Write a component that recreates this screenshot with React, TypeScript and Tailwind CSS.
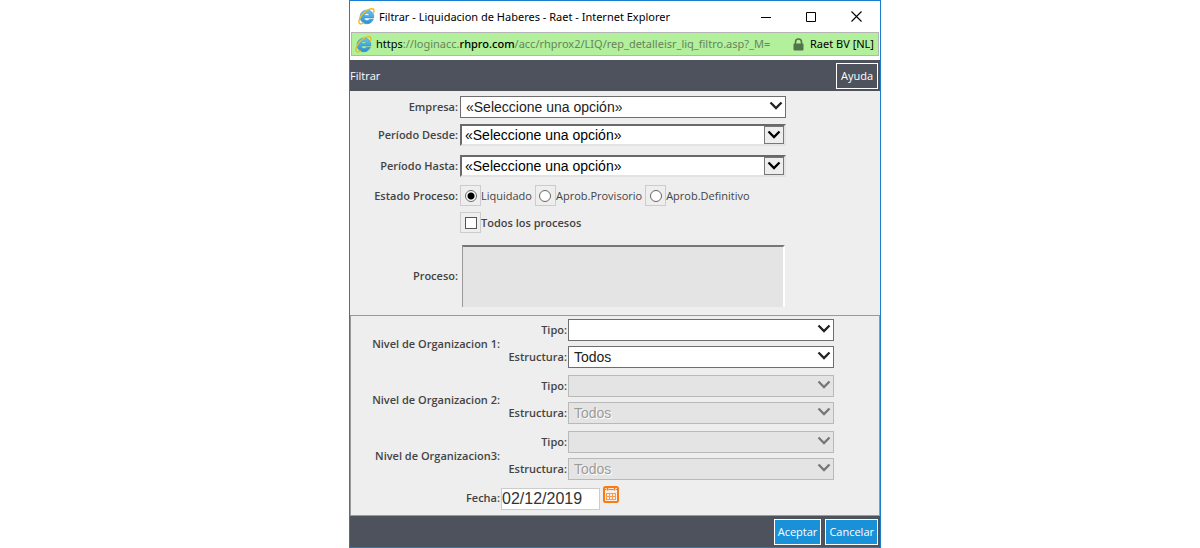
import { useState } from "react";
import type { ReactNode } from "react";

function ExplorerLogo({ id }: { id: string }) {
  return (
    <svg width="17" height="17" viewBox="0 0 17 17" aria-hidden="true" className="shrink-0">
      <defs>
        <linearGradient id={id} x1="0" y1="0" x2="0" y2="1">
          <stop offset="0" stopColor="#62c6f0" />
          <stop offset="1" stopColor="#2b8fd4" />
        </linearGradient>
      </defs>
      <path
        d="M8.800 2a6.900 6.900 0 1 0 6.600 9.200h-4a2.900 2.900 0 0 1-5.300-1.300H15.800A6.900 6.900 0 0 0 8.800 2zM6.200 7.400a2.700 2.700 0 0 1 5.300 0z"
        fill={`url(#${id})`}
        stroke="#2784c6"
        strokeWidth="0.5"
      />
      <path
        d="M15.400 5c.9-2 .9-3.500-.3-4C12.800.2 8.300 2.200 5 5.500C1.700 8.900.2 13.500 1.300 15.200c.7 1.100 2.400.8 4.200-.3"
        fill="none"
        stroke="#efbb22"
        strokeWidth="1.400"
        strokeLinecap="round"
      />
    </svg>
  );
}

function Chevron({ className }: { className: string }) {
  return (
    <svg width="14" height="10" viewBox="0 0 14 10" aria-hidden="true" className={className}>
      <path d="M1.500 1.500L7 7L12.500 1.500" fill="none" stroke="currentColor" strokeWidth="2.300" />
    </svg>
  );
}

type SelectProps = {
  id: string;
  value?: string;
  disabled?: boolean;
  sunken?: boolean;
};

function SelectBox({ id, value = "", disabled = false, sunken = false }: SelectProps) {
  const frame = sunken
    ? "border-2 border-t-[#696969] border-l-[#696969] border-r-[#e3e3e3] border-b-[#e3e3e3] bg-white pl-[3px] text-black"
    : disabled
      ? "border border-[#b9b9b9] bg-[#e4e4e4] pl-[5px] text-[#9b9b9b] [text-shadow:1px_1px_0_#fff]"
      : "border border-[#6e6e6e] bg-white pl-[5px] text-[#222]";
  return (
    <div className="relative">
      <select
        id={id}
        disabled={disabled}
        defaultValue={value}
        className={`block h-[22px] w-full appearance-none rounded-none font-['Liberation_Sans',Arial,sans-serif] text-[14px] leading-[18px] opacity-100 outline-none ${frame}`}
      >
        <option value={value}>{value}</option>
      </select>
      {sunken ? (
        <span className="pointer-events-none absolute top-[2px] right-[2px] flex h-[18px] w-5 items-center justify-center border border-[#777] bg-[#eee] text-black">
          <Chevron className="" />
        </span>
      ) : (
        <Chevron
          className={`pointer-events-none absolute top-[5px] right-[3px] ${disabled ? "text-[#777]" : "text-[#222]"}`}
        />
      )}
    </div>
  );
}

function Label({ htmlFor, children }: { htmlFor: string; children: ReactNode }) {
  return (
    <label htmlFor={htmlFor} className="text-right font-semibold whitespace-nowrap">
      {children}
    </label>
  );
}

function Level({ n, title, disabled, value }: { n: number; title: string; disabled: boolean; value: string }) {
  return (
    <div role="group" aria-labelledby={`nivel${n}`} className="grid grid-cols-[149px_1fr] items-center">
      <span id={`nivel${n}`} className="text-right font-semibold whitespace-nowrap">
        {title}
      </span>
      <div className="grid grid-cols-[67px_minmax(0,266px)] items-center gap-x-px gap-y-[5px] pt-[3px] pb-1">
        <Label htmlFor={`tipo${n}`}>Tipo:</Label>
        <SelectBox id={`tipo${n}`} disabled={disabled} />
        <Label htmlFor={`estructura${n}`}>Estructura:</Label>
        <SelectBox id={`estructura${n}`} value={value} disabled={disabled} />
      </div>
    </div>
  );
}

const STATES = ["Liquidado", "Aprob.Provisorio", "Aprob.Definitivo"];

export default function App() {
  const [state, setState] = useState(STATES[0]);
  const [all, setAll] = useState(false);
  const [date, setDate] = useState("02/12/2019");

  return (
    <main className="min-h-screen bg-white pl-[349px] font-['Open_Sans','Noto_Sans',sans-serif] text-[11px] leading-4 text-[#444]">
      <section className="w-full max-w-[532px] border border-[#1a7fd0] bg-white">
        <header className="flex h-[31px] items-center pr-[18px] pl-2 font-['Noto_Sans',sans-serif] text-black">
          <ExplorerLogo id="logo-title" />
          <h1 className="ml-1 flex-1 whitespace-nowrap">Filtrar - Liquidacion de Haberes - Raet - Internet Explorer</h1>
          <div className="flex gap-[35px]">
            <button type="button" aria-label="Minimizar">
              <svg width="10" height="10" viewBox="0 0 10 10"><path d="M0 5.500H10" stroke="#000" /></svg>
            </button>
            <button type="button" aria-label="Maximizar">
              <svg width="10" height="10" viewBox="0 0 10 10"><path d="M.5.5H9.500V9.500H.5Z" fill="none" stroke="#000" /></svg>
            </button>
            <button type="button" aria-label="Cerrar">
              <svg width="11" height="11" viewBox="0 0 11 11"><path d="M.5.5L10.500 10.500M10.500.5L.5 10.500" stroke="#000" strokeWidth="1.100" /></svg>
            </button>
          </div>
        </header>

        <div className="mx-px mb-1 flex h-6 items-center border border-[#b4b4b4] bg-[#b2f09c] pr-1 pl-[3px] font-['Noto_Sans',sans-serif] whitespace-nowrap text-[#67845d]">
          <ExplorerLogo id="logo-address" />
          <p className="ml-1 flex-1">
            <span className="text-black">https</span>://loginacc.<span className="font-medium text-black">rhpro.com</span>
            /acc/rhprox2/LIQ/rep_detalleisr_liq_filtro.asp?_M=
          </p>
          <svg width="11" height="13" viewBox="0 0 11 13" aria-hidden="true" className="mr-[6px] shrink-0">
            <path d="M2.500 6V4a3 3 0 0 1 6 0V6" fill="none" stroke="#53734a" strokeWidth="1.600" />
            <rect x="0.500" y="5.500" width="10" height="7" rx="1" fill="#53734a" />
          </svg>
          <span className="text-black">Raet BV [NL]</span>
        </div>

        <div className="flex h-[31px] items-center justify-between bg-[#4e525d] pr-0.5 text-white">
          <h2>Filtrar</h2>
          <button type="button" className="h-[26px] border border-white px-1">Ayuda</button>
        </div>

        <form onSubmit={(e) => e.preventDefault()}>
          <div className="bg-[#eee] pt-[5px] pb-2">
            <div className="grid grid-cols-[108px_minmax(0,326px)] items-center gap-x-0.5">
              <Label htmlFor="empresa">Empresa:</Label>
              <SelectBox id="empresa" value="«Seleccione una opción»" />
            </div>
            <div className="mt-[6px] grid grid-cols-[108px_minmax(0,326px)] items-center gap-x-0.5">
              <Label htmlFor="desde">Período Desde:</Label>
              <SelectBox id="desde" value="«Seleccione una opción»" sunken />
            </div>
            <div className="mt-[9px] grid grid-cols-[108px_minmax(0,326px)] items-center gap-x-0.5">
              <Label htmlFor="hasta">Período Hasta:</Label>
              <SelectBox id="hasta" value="«Seleccione una opción»" sunken />
            </div>
            <div role="radiogroup" aria-labelledby="estado" className="mt-2 grid grid-cols-[108px_1fr] items-center gap-x-0.5">
              <span id="estado" className="text-right font-semibold whitespace-nowrap">Estado Proceso:</span>
              <div className="flex gap-[3px]">
                {STATES.map((s) => (
                  <label key={s} className="flex items-center whitespace-nowrap">
                    <span className="flex size-[21px] items-center justify-center border border-[#ccc]">
                      <input
                        type="radio"
                        name="estado"
                        checked={state === s}
                        onChange={() => setState(s)}
                        className="size-3 appearance-none rounded-full border border-[#666] bg-white checked:bg-[radial-gradient(circle,#000_3px,#fff_4px)]"
                      />
                    </span>
                    {s}
                  </label>
                ))}
              </div>
            </div>
            <label className="mt-[6px] ml-[110px] flex items-center font-semibold">
              <span className="flex size-[21px] items-center justify-center border border-[#ccc]">
                <input
                  type="checkbox"
                  checked={all}
                  onChange={() => setAll(!all)}
                  className="size-3 appearance-none border border-[#555] bg-white checked:bg-[#555]"
                />
              </span>
              Todos los procesos
            </label>
            <div className="mt-3 grid grid-cols-[108px_minmax(0,323px)] items-center gap-x-1">
              <Label htmlFor="proceso">Proceso:</Label>
              <select
                id="proceso"
                multiple
                disabled
                className="block h-[62px] w-full appearance-none rounded-none border-t-2 border-r-2 border-l border-t-[#777] border-r-white border-l-[#999] bg-[#e4e4e4] opacity-100"
              />
            </div>
          </div>

          <div className="border border-[#999] bg-[#eee] pb-[5px]">
            <Level n={1} title="Nivel de Organizacion 1:" disabled={false} value="Todos" />
            <Level n={2} title="Nivel de Organizacion 2:" disabled value="Todos" />
            <Level n={3} title="Nivel de Organizacion3:" disabled value="Todos" />
            <div className="mt-0.5 grid h-6 grid-cols-[149px_99px_auto] items-center justify-start gap-x-px">
              <Label htmlFor="fecha">Fecha:</Label>
              <input
                id="fecha"
                type="text"
                value={date}
                onChange={(e) => setDate(e.target.value)}
                className="h-[22px] w-full self-end border border-[#ccc] bg-white font-['Liberation_Sans',Arial,sans-serif] text-[16px] text-[#333] outline-none"
              />
              <button type="button" aria-label="Elegir fecha" className="ml-0.5 self-start">
                <svg width="16" height="17" viewBox="0 0 16 17" className="block">
                  <rect x="1" y="1" width="14" height="15" rx="1.500" fill="#f9efe8" stroke="#f97b12" strokeWidth="2" />
                  <path d="M1 3.500H3M5.500 3.500H10.500M13 3.500H15" stroke="#f97b12" />
                  <path d="M4.500 0V4.500M11.500 0V4.500" stroke="#f97b12" strokeWidth="1.600" />
                  <path d="M3 7.500H13M3 10.500H13M3 13.500H13M3.500 7V14M6.500 7V14M9.500 7V14M12.500 7V14" fill="none" stroke="#fa9a50" />
                </svg>
              </button>
            </div>
          </div>

          <footer className="flex h-[31px] items-center justify-end gap-1 bg-[#4e525d] pr-0.5 text-white">
            <button type="submit" className="h-[26px] border border-white bg-[#1991d8] px-[3px]">Aceptar</button>
            <button type="button" className="h-[26px] border border-white bg-[#1991d8] px-[3px]">Cancelar</button>
          </footer>
        </form>
      </section>
    </main>
  );
}
